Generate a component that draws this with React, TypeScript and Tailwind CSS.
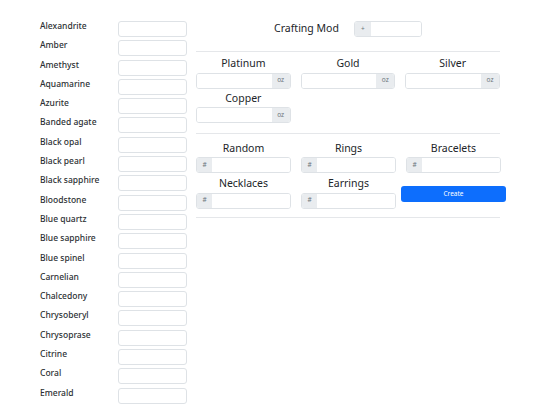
const gems = [
  'Alexandrite',
  'Amber',
  'Amethyst',
  'Aquamarine',
  'Azurite',
  'Banded agate',
  'Black opal',
  'Black pearl',
  'Black sapphire',
  'Bloodstone',
  'Blue quartz',
  'Blue sapphire',
  'Blue spinel',
  'Carnelian',
  'Chalcedony',
  'Chrysoberyl',
  'Chrysoprase',
  'Citrine',
  'Coral',
  'Emerald',
]

function Addon({ text }: { text: string }) {
  return (
    <span className="flex items-center justify-center bg-[#e9ecef] text-[6.5px] leading-none text-[#6c757d]">
      {text}
    </span>
  )
}

function OzInput({ label }: { label: string }) {
  return (
    <div className="flex flex-col items-stretch">
      <div className="text-center text-[10.5px] leading-[16px] text-[#212529]">{label}</div>
      <div className="mt-[1.5px] grid h-[16px] grid-cols-[1fr_18px] overflow-hidden rounded-[3px] border border-[#dee2e6]">
        <div className="bg-white" />
        <Addon text="oz" />
      </div>
    </div>
  )
}

function CountInput({ label }: { label: string }) {
  return (
    <div className="flex flex-col items-stretch">
      <div className="text-center text-[10.5px] leading-[16px] text-[#212529]">{label}</div>
      <div className="mt-[1.5px] grid h-[16px] grid-cols-[15px_1fr] overflow-hidden rounded-[3px] border border-[#dee2e6]">
        <Addon text="#" />
        <div className="bg-white" />
      </div>
    </div>
  )
}

export default function App() {
  return (
    <div className="flex h-[405px] w-[540px] overflow-hidden bg-white pt-[21px] pl-[40px] font-['Noto_Sans',sans-serif] text-[#212529]">
      {/* gem list */}
      <div className="flex w-[147px] shrink-0 flex-col gap-[3.3px]">
        {gems.map((g) => (
          <div key={g} className="flex items-start">
            <span className="w-[78px] text-[8.5px] font-medium leading-[10px] text-[#2b2f33]">{g}</span>
            <div className="h-[16px] w-[69px] rounded-[3px] border border-[#dee2e6] bg-white" />
          </div>
        ))}
      </div>

      {/* crafting panel */}
      <div className="ml-[9px] w-[309px]">
        <div className="w-[304px]">
          <div className="flex items-center justify-center gap-[15px]">
            <span className="text-[10.5px] leading-[15px]">Crafting Mod</span>
            <div className="grid h-[15.5px] w-[68px] grid-cols-[16px_1fr] overflow-hidden rounded-[3px] border border-[#dee2e6]">
              <Addon text="+" />
              <div className="bg-white" />
            </div>
          </div>

          <hr className="mt-[14px] border-[#e5e7ea]" />

          <div className="mt-[3.5px] grid grid-cols-3 gap-x-[10px] gap-y-[1px]">
            <OzInput label="Platinum" />
            <OzInput label="Gold" />
            <OzInput label="Silver" />
            <OzInput label="Copper" />
          </div>

          <hr className="mt-[10px] border-[#e5e7ea]" />
        </div>

        <div className="mt-[5.5px] grid grid-cols-[95px_95px_95px] gap-x-[10px] gap-y-[2px]">
          <CountInput label="Random" />
          <CountInput label="Rings" />
          <CountInput label="Bracelets" />
          <CountInput label="Necklaces" />
          <CountInput label="Earrings" />
          <div className="-mx-[5px] pt-[11px]">
            <button className="block h-[16px] w-full rounded-[3px] bg-[#0d6efd] text-[6.5px] leading-[16px] text-white">
              Create
            </button>
          </div>
        </div>

        <hr className="mt-[8.5px] w-[304px] border-[#e5e7ea]" />
      </div>
    </div>
  )
}
